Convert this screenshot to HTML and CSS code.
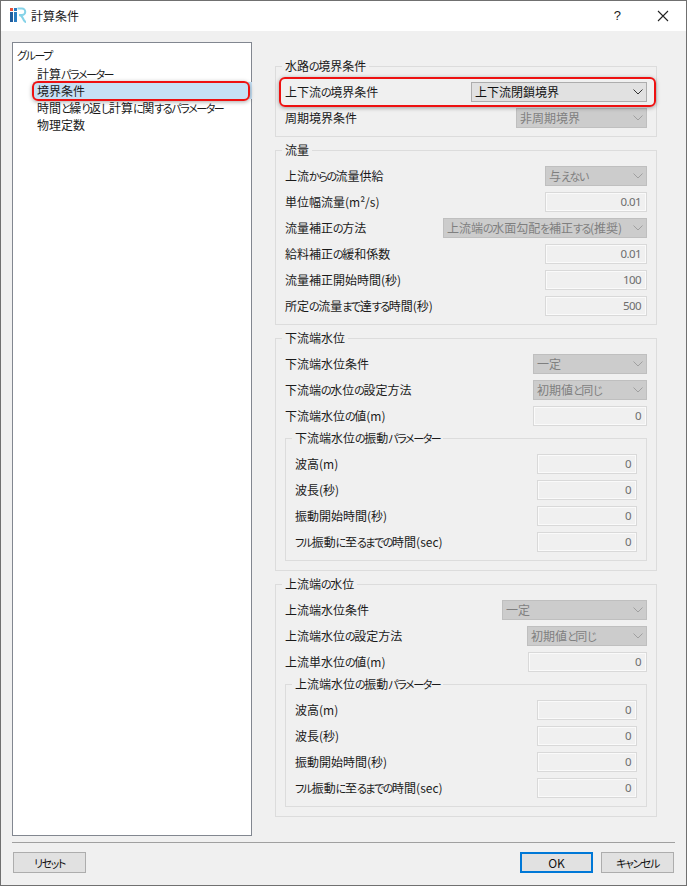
FILE: index.html
```html
<!DOCTYPE html>
<html lang="ja">
<head>
<meta charset="utf-8">
<title>計算条件</title>
<link rel="stylesheet" href="styles.css">
</head>
<body>
<div class="window">
  <header class="titlebar">
    <svg class="app-icon" width="18" height="18" viewBox="0 0 18 18">
      <rect x="1" y="1" width="3" height="3" fill="#e8503a"/>
      <rect x="1" y="5" width="3" height="10" fill="#1f5c9c"/>
      <rect x="5" y="1" width="3" height="3" fill="#2a7cc0"/>
      <rect x="5" y="5" width="3" height="10" fill="#2a7cc0"/>
      <path d="M8.500 1.500h4.500a3 3 0 0 1 0 6.500h-3q2.500 0 4 3.500t3 3.500" fill="none" stroke="#86d3e8" stroke-width="2"/>
    </svg>
    <span class="title">計算条件</span>
    <span class="help">?</span>
    <svg class="close" width="12" height="12" viewBox="0 0 12 12"><path d="M1 1l10 10M11 1L1 11" fill="none" stroke="#222" stroke-width="1.1"/></svg>
  </header>

  <main class="content">
    <nav class="tree">
      <div class="tree-root"><span class="k">グループ</span></div>
      <div class="tree-item">計算<span class="k">パラメーター</span></div>
      <div class="tree-item selected">境界条件<div class="mark mark-tree"></div></div>
      <div class="tree-item">時間<span class="k">と</span>繰<span class="k">り</span>返<span class="k">し</span>計算<span class="k">に</span>関<span class="k">するパラメーター</span></div>
      <div class="tree-item">物理定数</div>
    </nav>

    <section class="form">
      <fieldset class="group">
        <legend>水路<span class="k">の</span>境界条件</legend>
        <div class="row marked">
          <label>上下流<span class="k">の</span>境界条件</label>
          <div class="combo active w176"><span>上下流閉鎖境界</span><svg width="10" height="6" viewBox="0 0 10 6"><path d="M.5 .5L5 5 9.500 .5" fill="none" stroke="#333"/></svg></div>
          <div class="mark mark-row"></div>
        </div>
        <div class="row">
          <label>周期境界条件</label>
          <div class="combo w131"><span>非周期境界</span><svg width="10" height="6" viewBox="0 0 10 6"><path d="M.5 .5L5 5 9.500 .5" fill="none" stroke="#a0a0a0"/></svg></div>
        </div>
      </fieldset>

      <fieldset class="group">
        <legend>流量</legend>
        <div class="row">
          <label>上流<span class="k">からの</span>流量供給</label>
          <div class="combo w102"><span>与<span class="k">えない</span></span><svg width="10" height="6" viewBox="0 0 10 6"><path d="M.5 .5L5 5 9.500 .5" fill="none" stroke="#a0a0a0"/></svg></div>
        </div>
        <div class="row"><label>単位幅流量(m²/s)</label><div class="num w102">0.01</div></div>
        <div class="row">
          <label>流量補正<span class="k">の</span>方法</label>
          <div class="combo w204"><span>上流端<span class="k">の</span>水面勾配<span class="k">を</span>補正<span class="k">する</span>(推奨)</span><svg width="10" height="6" viewBox="0 0 10 6"><path d="M.5 .5L5 5 9.500 .5" fill="none" stroke="#a0a0a0"/></svg></div>
        </div>
        <div class="row"><label>給料補正<span class="k">の</span>緩和係数</label><div class="num w102">0.01</div></div>
        <div class="row"><label>流量補正開始時間(秒)</label><div class="num w102">100</div></div>
        <div class="row"><label>所定<span class="k">の</span>流量<span class="k">まで</span>達<span class="k">する</span>時間(秒)</label><div class="num w102">500</div></div>
      </fieldset>

      <fieldset class="group has-sub">
        <legend>下流端水位</legend>
        <div class="row">
          <label>下流端水位条件</label>
          <div class="combo w114"><span>一定</span><svg width="10" height="6" viewBox="0 0 10 6"><path d="M.5 .5L5 5 9.500 .5" fill="none" stroke="#a0a0a0"/></svg></div>
        </div>
        <div class="row">
          <label>下流端<span class="k">の</span>水位<span class="k">の</span>設定方法</label>
          <div class="combo w114"><span>初期値<span class="k">と</span>同<span class="k">じ</span></span><svg width="10" height="6" viewBox="0 0 10 6"><path d="M.5 .5L5 5 9.500 .5" fill="none" stroke="#a0a0a0"/></svg></div>
        </div>
        <div class="row"><label>下流端水位<span class="k">の</span>値(m)</label><div class="num w114">0</div></div>
        <fieldset class="group sub">
          <legend>下流端水位<span class="k">の</span>振動<span class="k">パラメーター</span></legend>
          <div class="row"><label>波高(m)</label><div class="num w100">0</div></div>
          <div class="row"><label>波長(秒)</label><div class="num w100">0</div></div>
          <div class="row"><label>振動開始時間(秒)</label><div class="num w100">0</div></div>
          <div class="row"><label><span class="k">フル</span>振動<span class="k">に</span>至<span class="k">るまでの</span>時間(sec)</label><div class="num w100">0</div></div>
        </fieldset>
      </fieldset>

      <fieldset class="group has-sub">
        <legend>上流端<span class="k">の</span>水位</legend>
        <div class="row">
          <label>上流端水位条件</label>
          <div class="combo w145"><span>一定</span><svg width="10" height="6" viewBox="0 0 10 6"><path d="M.5 .5L5 5 9.500 .5" fill="none" stroke="#a0a0a0"/></svg></div>
        </div>
        <div class="row">
          <label>上流端水位<span class="k">の</span>設定方法</label>
          <div class="combo w120"><span>初期値<span class="k">と</span>同<span class="k">じ</span></span><svg width="10" height="6" viewBox="0 0 10 6"><path d="M.5 .5L5 5 9.500 .5" fill="none" stroke="#a0a0a0"/></svg></div>
        </div>
        <div class="row"><label>上流単水位<span class="k">の</span>値(m)</label><div class="num w119">0</div></div>
        <fieldset class="group sub">
          <legend>上流端水位<span class="k">の</span>振動<span class="k">パラメーター</span></legend>
          <div class="row"><label>波高(m)</label><div class="num w100">0</div></div>
          <div class="row"><label>波長(秒)</label><div class="num w100">0</div></div>
          <div class="row"><label>振動開始時間(秒)</label><div class="num w100">0</div></div>
          <div class="row"><label><span class="k">フル</span>振動<span class="k">に</span>至<span class="k">るまでの</span>時間(sec)</label><div class="num w100">0</div></div>
        </fieldset>
      </fieldset>
    </section>
  </main>

  <footer class="footer">
    <button class="btn"><span class="k">リセット</span></button>
    <span class="spacer"></span>
    <button class="btn default">OK</button>
    <button class="btn"><span class="k">キャンセル</span></button>
  </footer>
</div>
</body>
</html>
```
FILE: styles.css
```css
* { box-sizing: border-box; }
html, body { margin: 0; padding: 0; }
body {
  width: 687px;
  height: 886px;
  overflow: hidden;
  background: #f0f0f0;
  font-family: "Noto Sans CJK JP", "Noto Sans", sans-serif;
  font-size: 12px;
  line-height: 14px;
  font-feature-settings: "palt";
  color: #1a1a1a;
}
.k { font-size: 11px; letter-spacing: -1.4px; }
.window {
  height: 886px;
  display: flex;
  flex-direction: column;
  border: 1px solid #707070;
  background: #f0f0f0;
}
.titlebar {
  height: 30px;
  flex: none;
  background: #fff;
  display: flex;
  align-items: center;
  padding-left: 8px;
}
.app-icon { flex: none; }
.title { margin-left: 4px; }
.help { margin-left: auto; margin-right: 36px; font-family: "Liberation Sans", sans-serif; font-size: 13px; }
.close { margin-right: 17px; }

.content {
  flex: 1;
  display: flex;
  padding: 11px 0 0 11px;
  min-height: 0;
}
.tree {
  width: 240px;
  height: 794px;
  flex: none;
  background: #fff;
  border: 1px solid #828790;
  padding-top: 4px;
}
.tree-root { padding-left: 4px; height: 18px; line-height: 16px; }
.tree-item { padding-left: 24px; height: 17px; line-height: 17px; }
.tree-item.selected {
  position: relative;
  background: #c6e0f5;
  margin: 0 -1px 0 20px;
  padding-left: 4px;
}
.mark {
  position: absolute;
  border: 2px solid #ee1111;
  box-shadow: 0 1px 4px rgba(0, 0, 0, .35);
  pointer-events: none;
}
.mark-tree { left: -1px; right: 2px; top: -1px; bottom: -2px; border-radius: 6px; }

.form {
  width: 382px;
  margin-left: 23px;
  margin-top: 17px;
  display: flex;
  flex-direction: column;
  gap: 6px;
}
.group {
  margin: 0;
  min-width: 0;
  border: 1px solid #dcdcdc;
  padding: 9px 9px 8px 9px;
  display: flex;
  flex-direction: column;
  gap: 6px;
}
.group.has-sub { padding-bottom: 9px; }
.group legend {
  padding: 0 3px;
  margin-left: -3px;
  line-height: 14px;
  height: 14px;
}
.group.sub { margin-top: -1px; }
.row {
  display: flex;
  align-items: center;
  justify-content: space-between;
  height: 20px;
}
.row.marked { position: relative; }
.mark-row { left: -6px; right: -9px; top: -5px; bottom: -5px; border-radius: 6px; }
.combo {
  height: 20px;
  background: #cccccc;
  border: 1px solid #bfbfbf;
  color: #7f7f7f;
  display: flex;
  align-items: center;
  justify-content: space-between;
  padding: 0 3px;
  white-space: nowrap;
}
.combo.active { background: #e1e1e1; border-color: #adadad; color: #111; }
.num {
  height: 20px;
  background: #f0f0f0;
  border: 1px solid #d9d9d9;
  box-shadow: inset 0 0 0 1px #fafafa;
  color: #6d6d6d;
  text-align: right;
  padding: 0 5px;
  line-height: 18px;
  font-family: "Noto Sans", sans-serif;
  font-size: 11.500px;
  letter-spacing: -.6px;
}
.w100 { width: 100px; }
.w102 { width: 102px; }
.w114 { width: 114px; }
.w119 { width: 119px; }
.w120 { width: 120px; }
.w131 { width: 131px; }
.w145 { width: 145px; }
.w176 { width: 176px; }
.w204 { width: 204px; }

.footer {
  flex: none;
  height: 43px;
  margin: 0 11px;
  border-top: 1px solid #a0a0a0;
  display: flex;
  align-items: flex-start;
  padding: 9px 1px 0 1px;
  gap: 8px;
}
.spacer { flex: 1; }
.btn {
  width: 73px;
  height: 21px;
  background: #e1e1e1;
  border: 1px solid #adadad;
  font: inherit;
  font-feature-settings: "palt";
  color: #111;
  padding: 0;
  line-height: 18px;
}
.btn.default { border: 2px solid #0078d7; line-height: 16px; }
```
